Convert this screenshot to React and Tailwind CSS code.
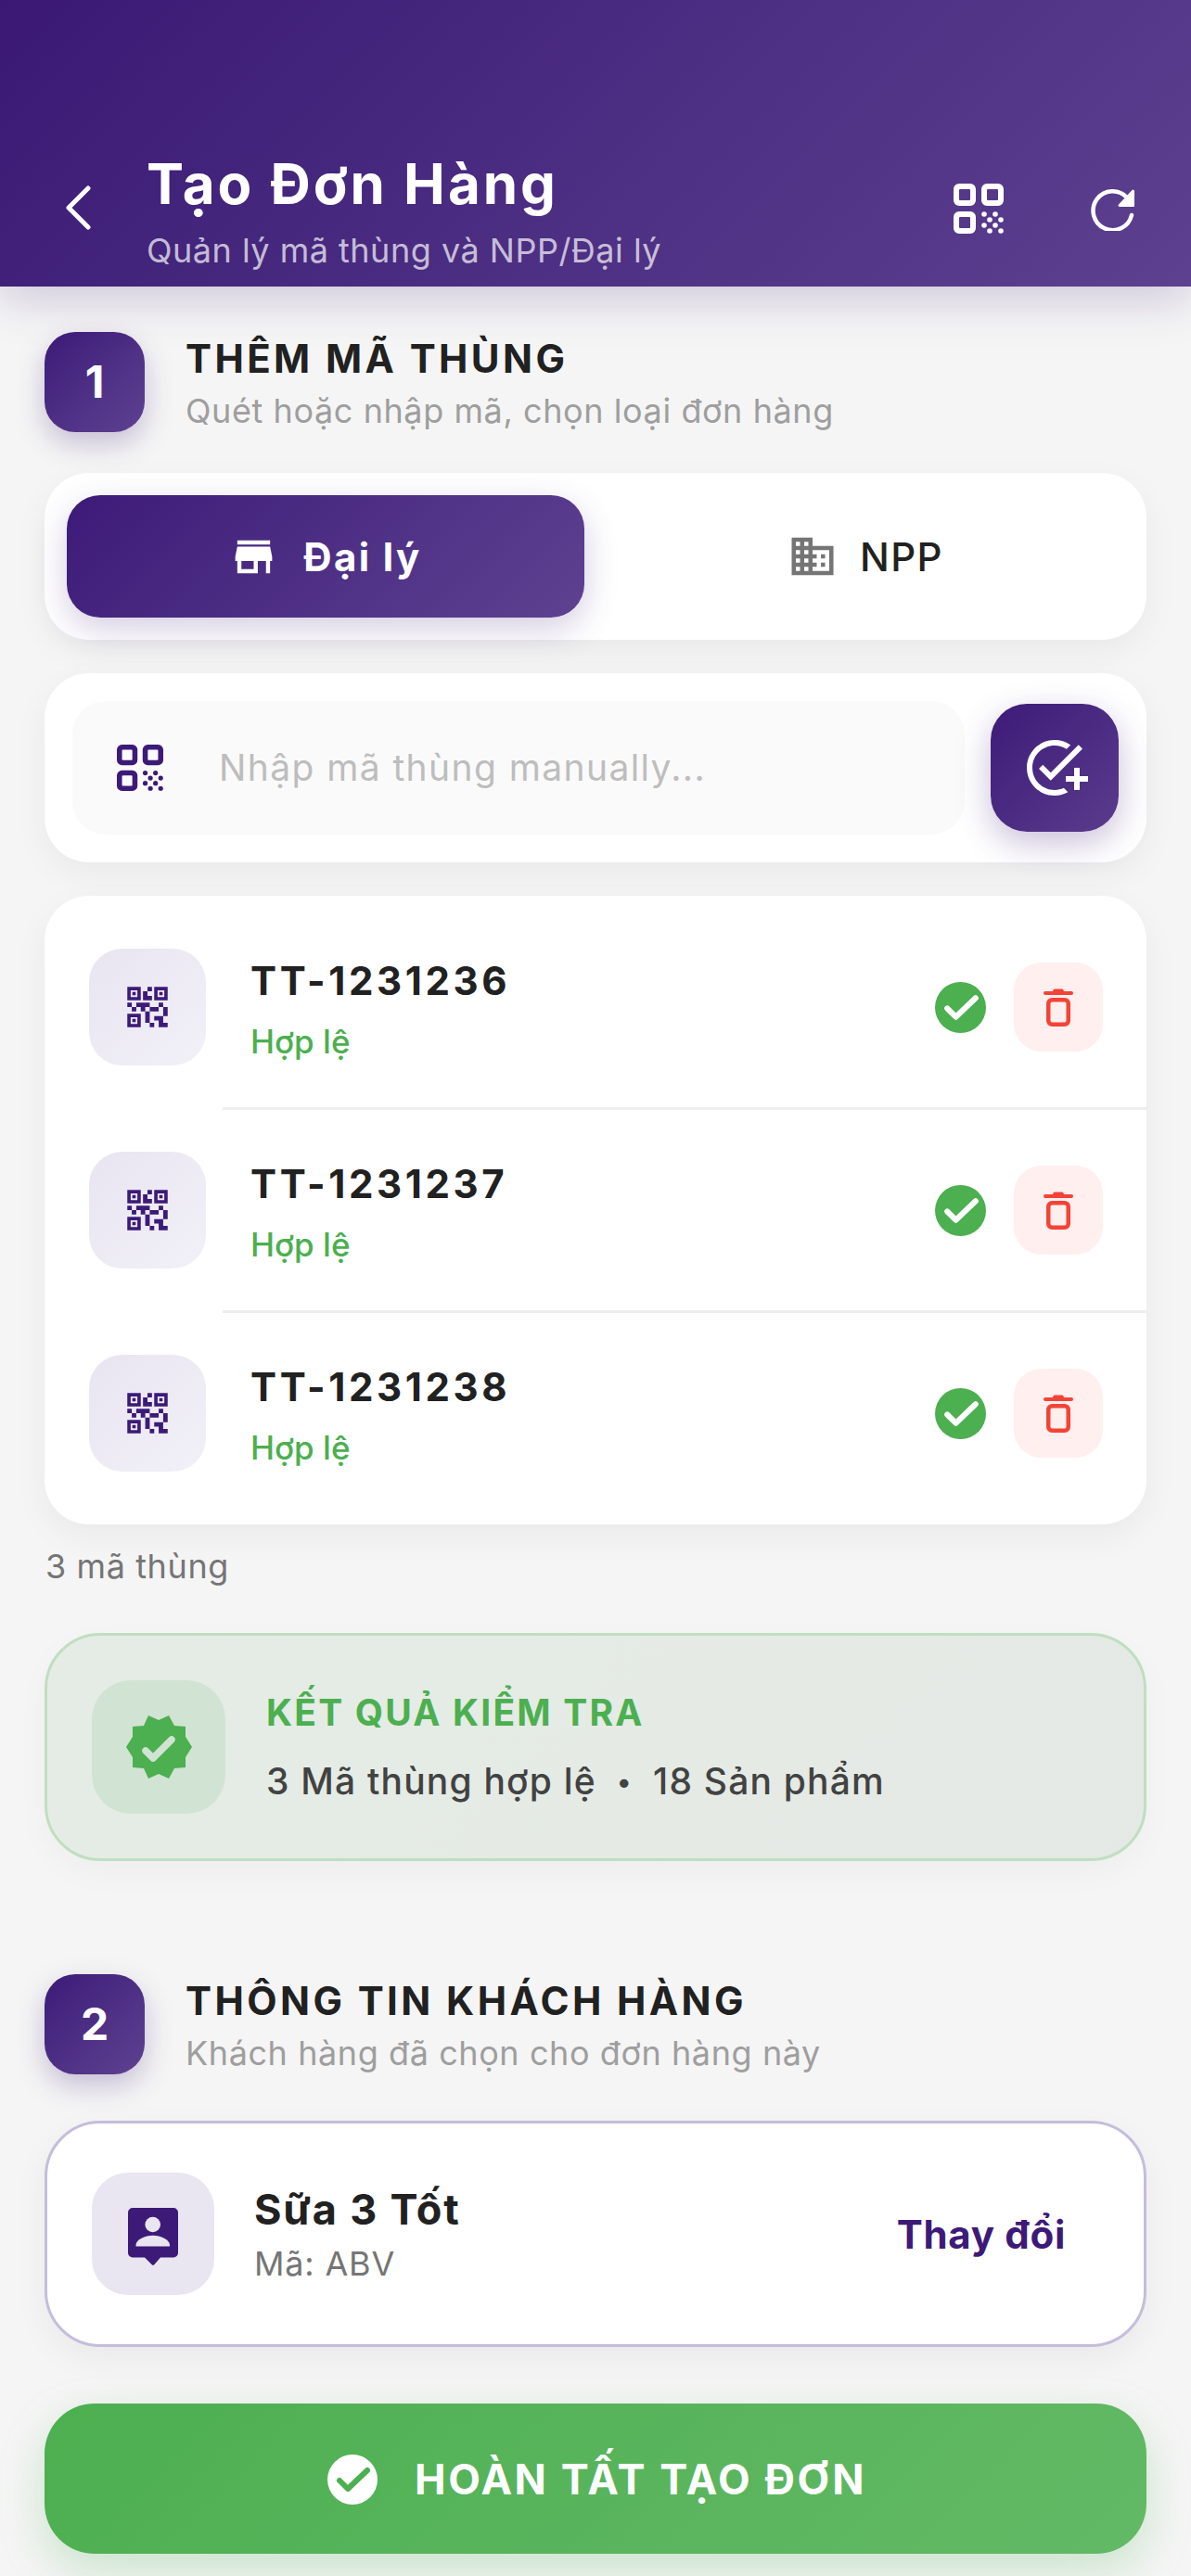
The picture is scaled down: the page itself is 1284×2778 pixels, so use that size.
import React from 'react';
import { MdStore, MdDomain, MdOutlineAddTask, MdQrCode2 } from 'react-icons/md';

const QrOutline = ({ className }) => (
    <svg viewBox="0 0 54 54" className={className} fill="currentColor">
        <path fillRule="evenodd" d="M6 0h12a6 6 0 0 1 6 6v12a6 6 0 0 1-6 6H6a6 6 0 0 1-6-6V6a6 6 0 0 1 6-6zm1 6a1 1 0 0 0-1 1v10a1 1 0 0 0 1 1h10a1 1 0 0 0 1-1V7a1 1 0 0 0-1-1z" />
        <path fillRule="evenodd" d="M36 0h12a6 6 0 0 1 6 6v12a6 6 0 0 1-6 6H36a6 6 0 0 1-6-6V6a6 6 0 0 1 6-6zm1 6a1 1 0 0 0-1 1v10a1 1 0 0 0 1 1h10a1 1 0 0 0 1-1V7a1 1 0 0 0-1-1z" />
        <path fillRule="evenodd" d="M6 30h12a6 6 0 0 1 6 6v12a6 6 0 0 1-6 6H6a6 6 0 0 1-6-6V36a6 6 0 0 1 6-6zm1 6a1 1 0 0 0-1 1v10a1 1 0 0 0 1 1h10a1 1 0 0 0 1-1V37a1 1 0 0 0-1-1z" />
        {[[33, 33], [45, 33], [39, 39], [51, 39], [33, 45], [45, 45], [39, 51], [51, 51]].map(([cx, cy]) => (
            <circle key={`${cx}-${cy}`} cx={cx} cy={cy} r="2.800" />
        ))}
    </svg>
);

const RefreshIcon = ({ className }) => (
    <svg viewBox="0 0 48 48" className={className} fill="none">
        <path d="M44 31a21 21 0 1 1-5-19" stroke="currentColor" strokeWidth="4.500" strokeLinecap="round" />
        <path d="M47 5v16a1 1 0 0 1-1 1H31a1.500 1.500 0 0 1-1-2.600L44.500 4a1.500 1.500 0 0 1 2.500 1z" fill="currentColor" />
    </svg>
);

const ChevronBack = ({ className }) => (
    <svg viewBox="0 0 28 48" className={className} fill="none">
        <path d="M25 3 4 24l21 21" stroke="currentColor" strokeWidth="5" strokeLinecap="round" strokeLinejoin="round" />
    </svg>
);

const TrashIcon = ({ className }) => (
    <svg viewBox="0 0 32 41" className={className} fill="none">
        <path d="M10 3.500c0-2.500 1.500-3 3-3h6c1.500 0 3 .5 3 3z" fill="currentColor" />
        <path d="M2 5h28" stroke="currentColor" strokeWidth="4" strokeLinecap="round" />
        <rect x="5.250" y="12.250" width="21.500" height="26.500" rx="4" stroke="currentColor" strokeWidth="4.500" />
    </svg>
);

const CheckDisc = ({ className, disc, tick, width = 6 }) => (
    <svg viewBox="0 0 54 54" className={className}>
        <circle cx="27" cy="27" r="27" fill={disc} />
        <path d="M13 28 22 37 43 17" fill="none" stroke={tick} strokeWidth={width} strokeLinecap="round" strokeLinejoin="round" />
    </svg>
);

const BadgeCheck = ({ className }) => (
    <svg viewBox="0 0 71 68" className={className}>
        <polygon fill="#4caf50" points="24,0 35,5 46,0 52,11 64,12 64,23 71,34 64,45 64,56 52,57 46,68 35,63 24,68 19,57 7,56 7,45 0,34 7,23 7,12 19,11" />
        <path d="M21 38 29 46 49 26" fill="none" stroke="#d1e3d3" strokeWidth="7.500" strokeLinecap="round" strokeLinejoin="round" />
    </svg>
);

// Rounded card with a head and shoulders, and a small pointer underneath
const ContactPin = ({ className }) => (
    <svg viewBox="0 0 54 62" className={className}>
        <path fill="#3d1a78" d="M5 0h44a5 5 0 0 1 5 5v43.500a5 5 0 0 1-5 5H35l-6.500 7.500a2 2 0 0 1-3 0L18 53.500H5a5 5 0 0 1-5-5V5a5 5 0 0 1 5-5z" />
        <circle cx="26.700" cy="18" r="8.300" fill="#e9e6f1" />
        <path fill="#e9e6f1" d="M8.500 41.500v-1.500c0-6 10-10.300 18.300-10.300S45 34 45 40v1.500z" />
    </svg>
);

const StepHeading = ({ step, title, hint }) => (
    <div className="flex items-center h-[108px]">
        <div className="w-[108px] h-[108px] rounded-[33px] bg-linear-135 from-[#3d1a78] to-[#5f4191] flex items-center justify-center shadow-[0_12px_30px_rgba(61,26,120,0.25)]">
            <span className="text-white font-bold text-[48px] leading-none">{step}</span>
        </div>
        <div className="ml-[44px] mt-[2px]">
            <div className="text-[#212121] font-bold text-[42px] leading-[54px] tracking-[3.400px]">{title}</div>
            <div className="text-[#9e9e9e] text-[36px] leading-[48px] tracking-[0.580px] mt-[5px]">{hint}</div>
        </div>
    </div>
);

const CodeRow = ({ code, last }) => (
    <div className="relative flex items-center h-[216px] pl-[48px] pr-[47px]">
        <div className="w-[126px] h-[126px] rounded-[36px] bg-linear-135 from-[#e8e5f1] to-[#f2f0f7] flex items-center justify-center">
            <MdQrCode2 className="w-[58px] h-[58px] text-[#3d1a78] -mt-[1px]" />
        </div>
        <div className="ml-[48px] flex-1 mt-[2px]">
            <div className="text-[#212121] font-bold text-[42px] leading-[54px] tracking-[3.600px]">{code}</div>
            <div className="text-[#4caf50] font-medium text-[35px] leading-[42px] mt-[17px]">Hợp lệ</div>
        </div>
        <CheckDisc className="w-[55px] h-[55px] mr-[30px]" disc="#4caf50" tick="#ffffff" />
        <div className="w-[96px] h-[96px] rounded-[30px] bg-[#ffefee] flex items-center justify-center">
            <TrashIcon className="w-[32px] h-[41px] text-[#f44336]" />
        </div>
        {!last && <div className="absolute left-[192px] right-0 -bottom-[3px] h-[3px] bg-[#eeeeee]"></div>}
    </div>
);

export default function App() {
    return (
        <div className="w-[1284px] h-[2778px] bg-[#f5f5f5] overflow-hidden font-['Inter',sans-serif]">
            {/* Top bar */}
            <div className="relative h-[309px] bg-linear-135 from-[#3a1874] to-[#5e4090] shadow-[0_12px_48px_rgba(61,26,120,0.22)] flex items-end pb-[14px] pl-[70px] pr-[60px]">
                <ChevronBack className="w-[28px] h-[48px] text-white mb-[47px]" />
                <div className="ml-[60px] flex-1">
                    <div className="text-white font-bold text-[60px] leading-[70px] tracking-[3px]">Tạo Đơn Hàng</div>
                    <div className="text-white/70 text-[36px] leading-[50px] tracking-[0.500px] mt-[12px]">Quản lý mã thùng và NPP/Đại lý</div>
                </div>
                <QrOutline className="w-[54px] h-[54px] text-white mb-[43px]" />
                <RefreshIcon className="w-[48px] h-[48px] text-white ml-[94px] mb-[46px]" />
            </div>

            <div className="px-[48px] pt-[49px]">
                <StepHeading step="1" title="THÊM MÃ THÙNG" hint="Quét hoặc nhập mã, chọn loại đơn hàng" />

                {/* Type switch */}
                <div className="mt-[44px] h-[180px] rounded-[48px] bg-white p-[24px] flex shadow-[0_12px_36px_rgba(0,0,0,0.05)]">
                    <div className="w-[558px] rounded-[36px] bg-linear-135 from-[#3d1a78] to-[#5f4191] flex items-center justify-center shadow-[0_12px_36px_rgba(61,26,120,0.22)]">
                        <MdStore className="w-[53px] h-[53px] text-white" />
                        <span className="ml-[27px] text-white font-bold text-[42px] tracking-[2.400px]">Đại lý</span>
                    </div>
                    <div className="flex-1 flex items-center justify-center pl-[24px]">
                        <MdDomain className="w-[54px] h-[54px] text-[#757575]" />
                        <span className="ml-[24px] text-[#212121] font-medium text-[42px] tracking-[1.500px]">NPP</span>
                    </div>
                </div>

                {/* Manual entry */}
                <div className="mt-[36px] h-[204px] rounded-[48px] bg-white pl-[30px] pr-[30px] flex items-center shadow-[0_12px_36px_rgba(0,0,0,0.05)]">
                    <div className="w-[962px] h-[144px] rounded-[36px] bg-[#fafafa] flex items-center pl-[48px]">
                        <QrOutline className="w-[50px] h-[50px] text-[#3d1a78]" />
                        <span className="ml-[60px] text-[#bdbdbd] text-[39px] tracking-[1.400px]">Nhập mã thùng manually...</span>
                    </div>
                    <div className="ml-[28px] w-[138px] h-[138px] rounded-[39px] bg-linear-135 from-[#3d1a78] to-[#5a3b8c] flex items-center justify-center shadow-[0_12px_36px_rgba(61,26,120,0.28)]">
                        <MdOutlineAddTask className="w-[72px] h-[72px] text-white" />
                    </div>
                </div>

                {/* Scanned codes */}
                <div className="mt-[36px] rounded-[48px] bg-white py-[12px] shadow-[0_12px_36px_rgba(0,0,0,0.05)]">
                    <div className="flex flex-col gap-[3px]">
                        <CodeRow code="TT-1231236" />
                        <CodeRow code="TT-1231237" />
                        <CodeRow code="TT-1231238" last />
                    </div>
                </div>
                <div className="mt-[21px] ml-[1px] text-[#757575] text-[36px] leading-[48px] tracking-[0.600px]">3 mã thùng</div>

                {/* Check result */}
                <div className="mt-[48px] h-[246px] rounded-[60px] border-[3px] border-[#bfdfc0] bg-linear-135 from-[#e5ece5] to-[#e5e9e5] flex items-center pl-[48px] shadow-[0_12px_36px_rgba(0,0,0,0.03)]">
                    <div className="w-[144px] h-[144px] rounded-[42px] bg-[#d1e3d3] flex items-center justify-center">
                        <BadgeCheck className="w-[71px] h-[68px]" />
                    </div>
                    <div className="ml-[44px]">
                        <div className="text-[#4caf50] font-bold text-[39px] leading-[48px] tracking-[2.200px]">KẾT QUẢ KIỂM TRA</div>
                        <div className="mt-[26px] text-[#424242] font-medium text-[39px] leading-[48px] tracking-[1.200px] flex items-center">
                            <span>3 Mã thùng hợp lệ</span>
                            <span className="mx-[22px] text-[30px]">•</span>
                            <span>18 Sản phẩm</span>
                        </div>
                    </div>
                </div>

                <div className="mt-[122px]">
                    <StepHeading step="2" title="THÔNG TIN KHÁCH HÀNG" hint="Khách hàng đã chọn cho đơn hàng này" />
                </div>

                {/* Selected customer */}
                <div className="mt-[50px] h-[244px] rounded-[60px] border-[3px] border-[#c5bddb] bg-white flex items-center pl-[48px] pr-[84px] shadow-[0_12px_36px_rgba(0,0,0,0.05)]">
                    <div className="w-[132px] h-[132px] rounded-[39px] bg-[#e9e6f1] flex items-center justify-center">
                        <ContactPin className="w-[54px] h-[62px] mt-[6px]" />
                    </div>
                    <div className="ml-[43px] flex-1">
                        <div className="text-[#212121] font-bold text-[45px] leading-[60px] tracking-[1.800px]">Sữa 3 Tốt</div>
                        <div className="mt-[4px] text-[#757575] text-[36px] leading-[48px] tracking-[0.800px]">Mã: ABV</div>
                    </div>
                    <span className="text-[#3d1a78] font-bold text-[42px] tracking-[0.700px]">Thay đổi</span>
                </div>

                {/* Submit */}
                <div className="mt-[61px] h-[162px] rounded-[54px] bg-linear-135 from-[#4caf50] to-[#63b966] flex items-center justify-center pl-[3px] pt-[2px] shadow-[0_18px_48px_rgba(76,175,80,0.25)]">
                    <CheckDisc className="w-[54px] h-[54px]" disc="#ffffff" tick="#4caf50" width={6} />
                    <span className="ml-[40px] text-white font-bold text-[45px] tracking-[2.550px]">HOÀN TẤT TẠO ĐƠN</span>
                </div>
            </div>
        </div>
    );
}
